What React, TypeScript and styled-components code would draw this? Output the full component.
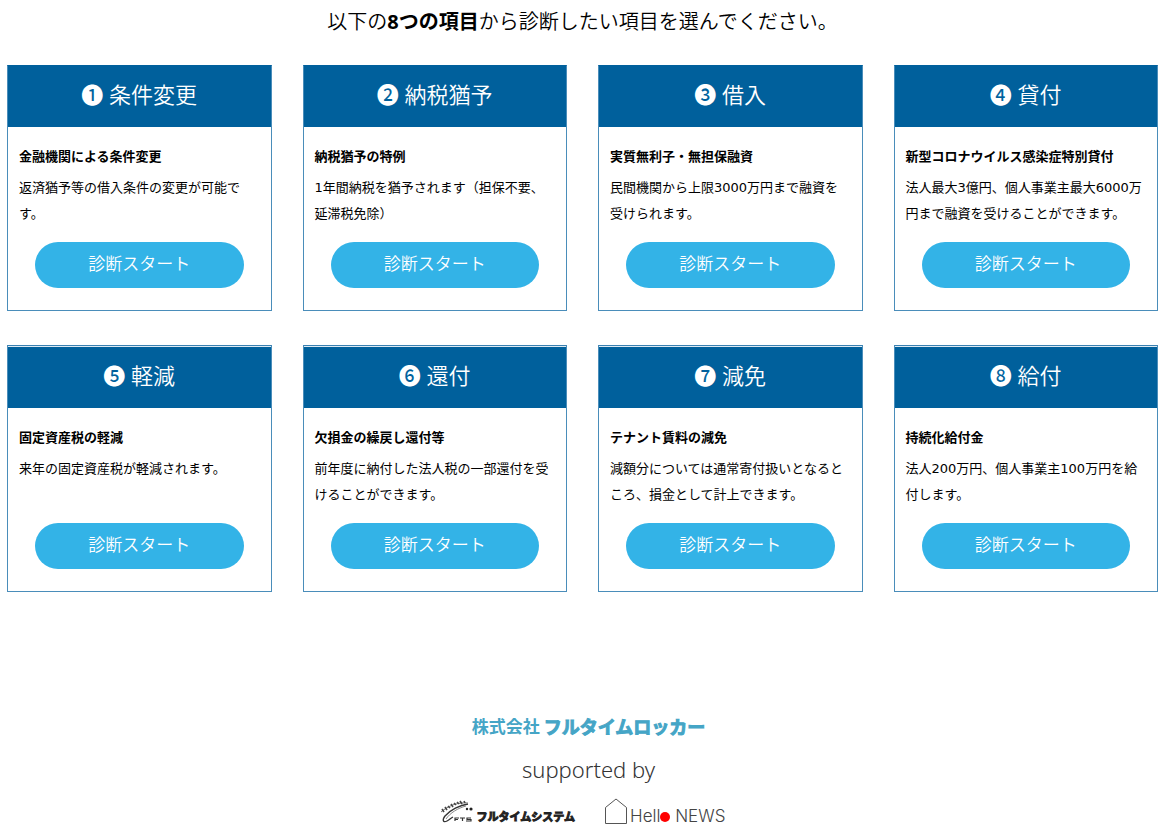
import React from "react";
import styled, { createGlobalStyle } from "styled-components";

const GlobalStyle = createGlobalStyle`
  *, *::before, *::after { box-sizing: border-box; }
  body {
    margin: 0;
    background: #fff;
    color: #000;
    font-family: "Noto Sans", "Noto Sans CJK JP", sans-serif;
  }
  h1, h2, h3, p { margin: 0; font-weight: 400; }
  strong { font-weight: 700; }
`;

const Page = styled.main`
  padding: 7px 8px 8px 7px;
`;

const Lead = styled.h1`
  font-size: 20px;
  font-weight: 350;
  line-height: 30px;
  text-align: center;
`;

const Grid = styled.div`
  display: grid;
  grid-template-columns: repeat(4, 1fr);
  gap: 34px 31px;
  margin-top: 28px;
`;

const Card = styled.section<{ $ruled: boolean }>`
  display: flex;
  flex-direction: column;
  border: 1px solid #4a8dba;
  border-top-color: ${(p) => (p.$ruled ? "#3a80b0" : "#00609c")};
`;

const CardHead = styled.h2<{ $ruled: boolean }>`
  border-top: ${(p) => (p.$ruled ? "1px solid #dceaf4" : "0")};
  background: #00609c;
  color: #fff;
  font-size: 22px;
  font-weight: 350;
  line-height: 32px;
  padding: 12px 8px 17px;
  text-align: center;
`;

const Mark = styled.span`
  font-weight: 500;
`;

const CardBody = styled.div`
  display: flex;
  flex-direction: column;
  flex: 1;
  padding: 16px 11px 22px;
`;

const CardTitle = styled.h3`
  font-size: 13px;
  line-height: 26px;
  font-weight: 700;
`;

const CardText = styled.p`
  margin-top: 6px;
  min-height: 52px;
  padding-right: 2px;
  font-family: "DejaVu Sans", "Noto Sans CJK JP", sans-serif;
  font-size: 13px;
  line-height: 26px;
`;

const StartLink = styled.a`
  margin: 15px 16px 0;
  border-radius: 23px;
  background: #33b3e7;
  color: #fff;
  font-size: 17px;
  font-weight: 350;
  line-height: 26px;
  padding: 9px 0 11px;
  text-align: center;
  text-decoration: none;
`;

const Footer = styled.footer`
  display: flex;
  flex-direction: column;
  align-items: center;
  margin-top: 122px;
`;

const Company = styled.p`
  display: flex;
  gap: 4px;
  padding-left: 12px;
  color: #45a5c6;
  font-size: 17px;
  line-height: 26px;
  font-weight: 700;
`;

const Heavy = styled.span`
  font-size: 18px;
  -webkit-text-stroke: 1px currentColor;
`;

const Supported = styled.p`
  margin-top: 13px;
  padding-left: 12px;
  color: #333;
  font-family: "Noto Sans", sans-serif;
  font-weight: 300;
  font-size: 22px;
  line-height: 32px;
`;

const Partners = styled.div`
  display: flex;
  align-items: flex-end;
  gap: 30px;
  margin-top: 13px;
`;

const Partner = styled.div`
  display: flex;
  align-items: flex-end;
  gap: 3px;
`;

const SystemName = styled.span`
  color: #222;
  font-size: 11px;
  line-height: 16px;
  font-weight: 700;
  -webkit-text-stroke: 1px currentColor;
`;

const NewsName = styled.span`
  color: #444;
  font-family: "Inter", sans-serif;
  font-weight: 300;
  font-size: 17px;
  line-height: 17px;
`;

const items = [
  { mark: "❶", name: "条件変更", title: "金融機関による条件変更", text: "返済猶予等の借入条件の変更が可能です。" },
  { mark: "❷", name: "納税猶予", title: "納税猶予の特例", text: "1年間納税を猶予されます（担保不要、延滞税免除）" },
  { mark: "❸", name: "借入", title: "実質無利子・無担保融資", text: "民間機関から上限3000万円まで融資を受けられます。" },
  { mark: "❹", name: "貸付", title: "新型コロナウイルス感染症特別貸付", text: "法人最大3億円、個人事業主最大6000万円まで融資を受けることができます。" },
  { mark: "❺", name: "軽減", title: "固定資産税の軽減", text: "来年の固定資産税が軽減されます。" },
  { mark: "❻", name: "還付", title: "欠損金の繰戻し還付等", text: "前年度に納付した法人税の一部還付を受けることができます。" },
  { mark: "❼", name: "減免", title: "テナント賃料の減免", text: "減額分については通常寄付扱いとなるところ、損金として計上できます。" },
  { mark: "❽", name: "給付", title: "持続化給付金", text: "法人200万円、個人事業主100万円を給付します。" },
];

const SwooshLogo = () => (
  <svg width="34" height="25" viewBox="0 0 34 25" fill="none" aria-hidden="true">
    <path d="M28 4C20 5 10 10 5 16c-3 4-2 7 2 5 2-1 4-3 6-4" stroke="#333" strokeWidth="1.3" />
    <path d="M26 6C18 8 10 13 6 19" stroke="#888" />
    <path d="M1 12C8 6 17 2 28 3" stroke="#777" />
    <path d="M2 9l2 3M5 7l2 3M8 6l2 2M11 4l2 3M14 3l2 2M17 2l2 2M20 1l2 3M24 1l1 2" stroke="#444" strokeWidth="1.6" />
    <circle cx="27" cy="9" r="1.2" fill="#222" />
    <circle cx="31" cy="9" r="1.6" fill="#222" />
    <path d="M15 21v-3h4M15 19.500h3M20 18h5M22.500 18v3M31 18h-4v1.500h4V21h-5" stroke="#333" strokeWidth="1.2" />
  </svg>
);

const HouseLogo = () => (
  <svg width="22" height="27" viewBox="0 0 22 27" fill="none" aria-hidden="true">
    <path d="M.5 9.500L11 1l10.500 8.500V25.500H.5z" stroke="#555" />
  </svg>
);

const RedDot = () => (
  <svg width="10" height="10" viewBox="0 0 10 10" aria-hidden="true">
    <circle cx="5" cy="5" r="5" fill="#f00" />
  </svg>
);

export default function App() {
  return (
    <>
      <GlobalStyle />
      <Page>
        <Lead>
          以下の<strong>8つの項目</strong>から診断したい項目を選んでください。
        </Lead>
        <Grid>
          {items.map((item, i) => (
            <Card key={item.mark} $ruled={i > 3}>
              <CardHead $ruled={i > 3}>
                <Mark>{item.mark}</Mark> {item.name}
              </CardHead>
              <CardBody>
                <CardTitle>{item.title}</CardTitle>
                <CardText>{item.text}</CardText>
                <StartLink href="#start">診断スタート</StartLink>
              </CardBody>
            </Card>
          ))}
        </Grid>
        <Footer>
          <Company>
            <span>株式会社</span>
            <Heavy>フルタイムロッカー</Heavy>
          </Company>
          <Supported>supported by</Supported>
          <Partners>
            <Partner>
              <SwooshLogo />
              <SystemName>フルタイムシステム</SystemName>
            </Partner>
            <Partner>
              <HouseLogo />
              <NewsName>
                Hell
                <RedDot /> NEWS
              </NewsName>
            </Partner>
          </Partners>
        </Footer>
      </Page>
    </>
  );
}
